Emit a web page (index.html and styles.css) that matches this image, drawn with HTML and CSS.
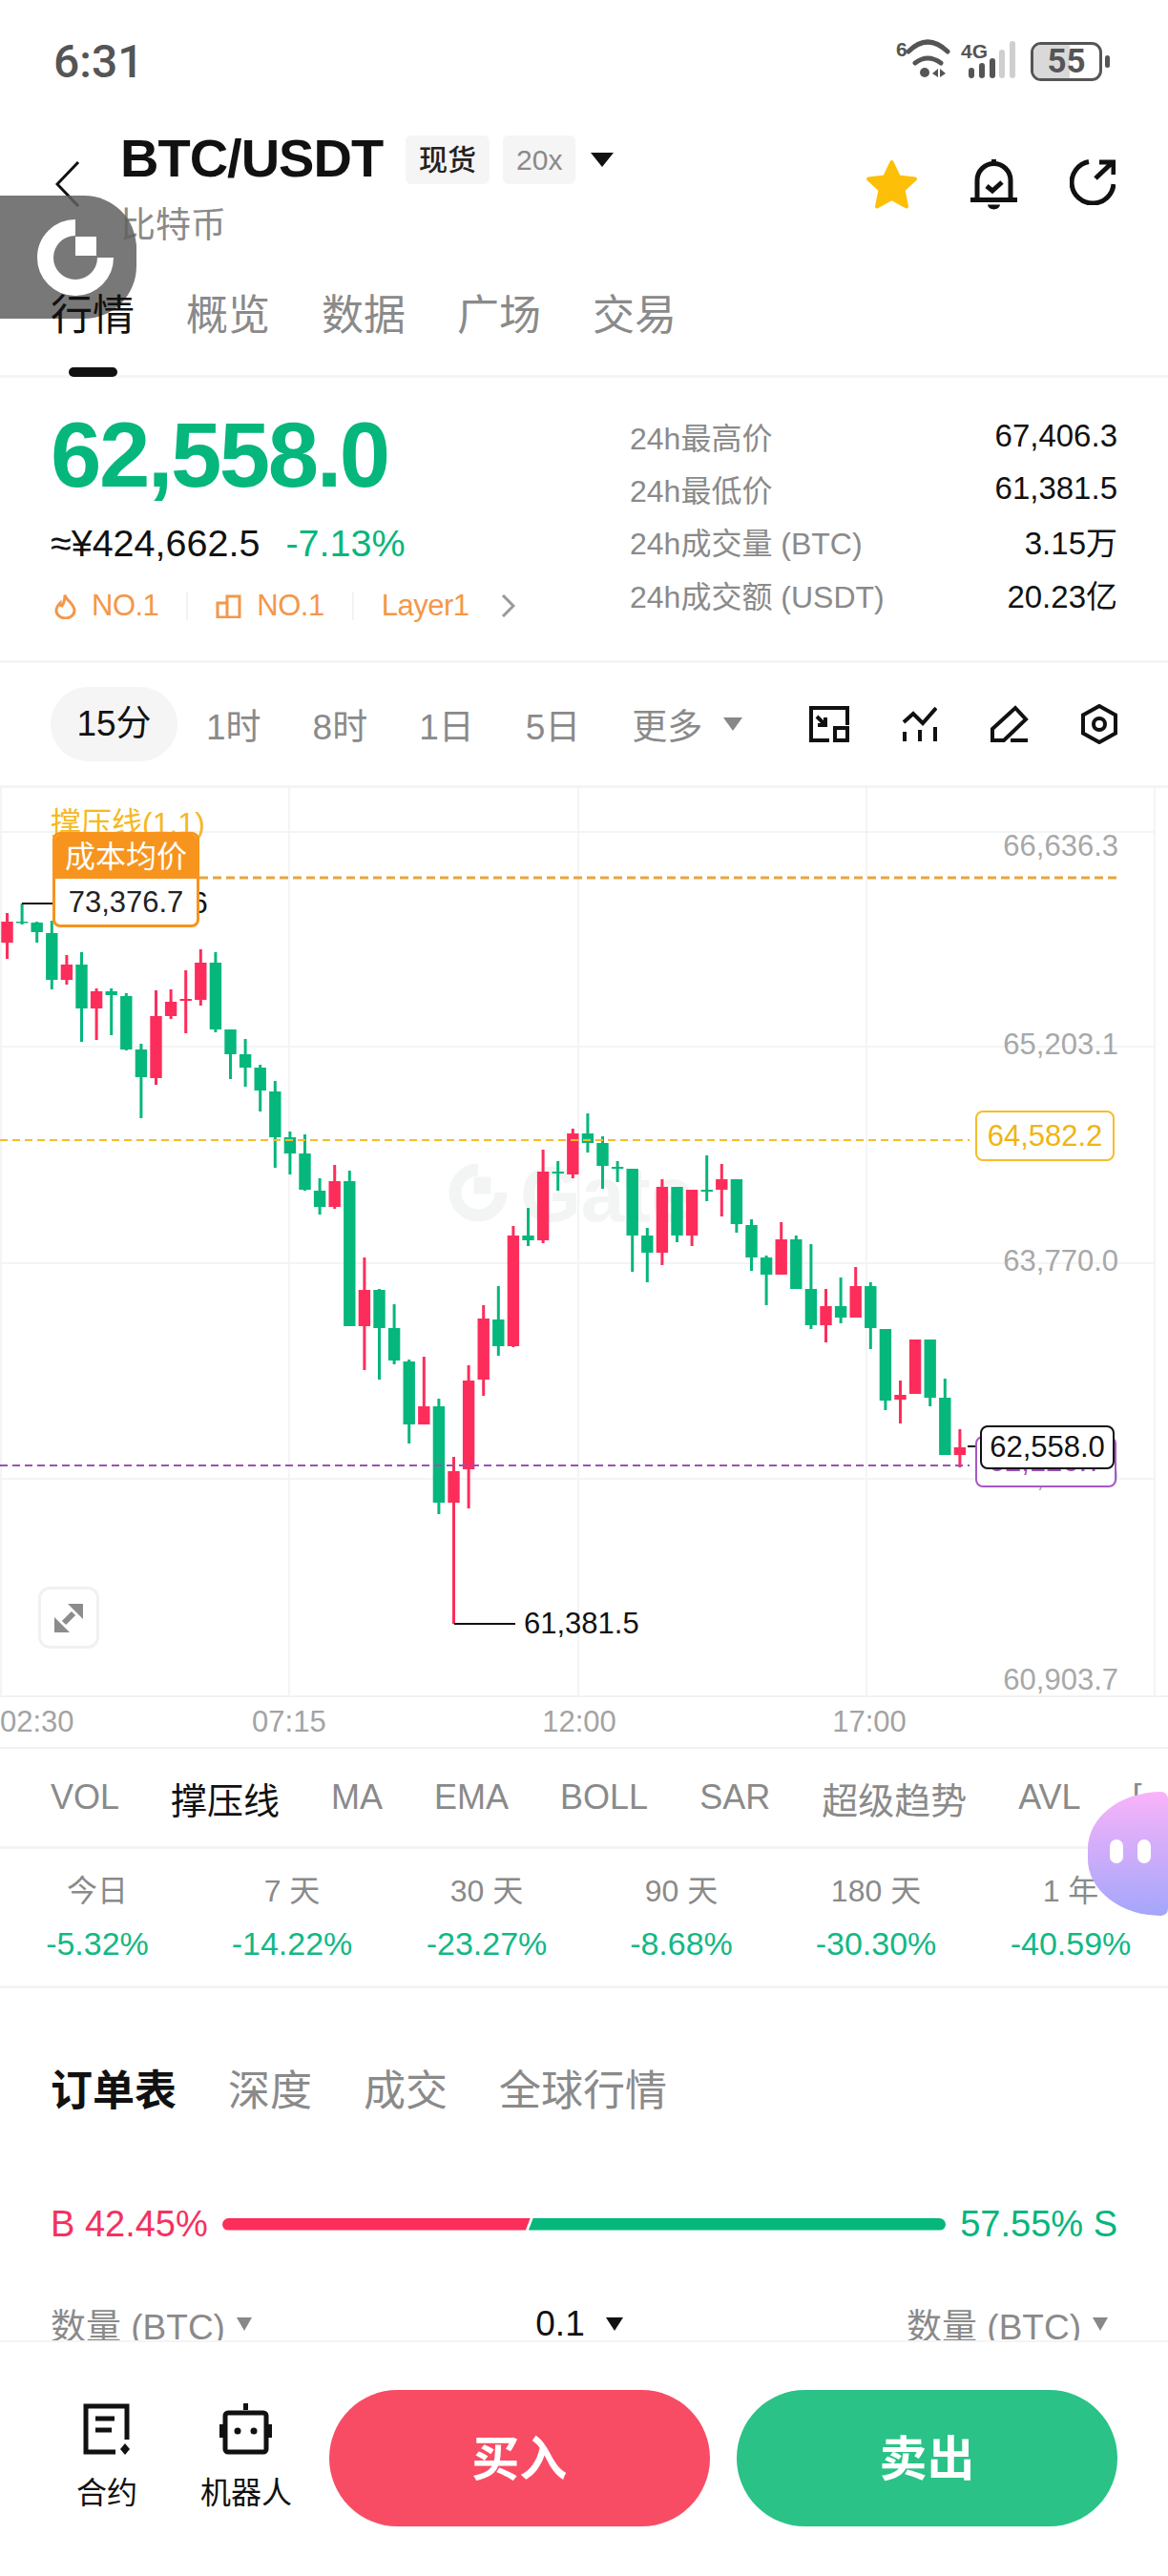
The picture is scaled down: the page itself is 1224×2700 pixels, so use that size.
FILE: index.html
```html
<!DOCTYPE html>
<html lang="en">

<head>
    <meta charset="UTF-8">
    <meta name="viewport" content="width=device-width, initial-scale=1.0">
    <title>BTC/USDT</title>
    <link rel="stylesheet" href="styles.css">
</head>

<body>
    <div class="page">
        <div class="status-bar">
            <span class="clock">6:31</span>
            <div class="status-icons">
                <svg class="net-icon" width="133" height="50" viewBox="0 0 133 50">
                    <text class="net-text" x="2" y="20">6</text>
                    <path class="net-arc" d="M15 15Q35 -5 56 15M22 27Q35 17 49 27"/>
                    <circle class="net-fill" cx="32" cy="37" r="5"/>
                    <polygon class="net-fill" points="40,38 46,33 46,42"/>
                    <polygon class="net-fill" points="48,33 54,38 48,42"/>
                    <text class="net-text" x="70" y="22">4G</text>
                    <rect class="net-fill" x="78" y="32" width="6" height="11" rx="3"/>
                    <rect class="net-fill" x="89" y="27" width="6" height="16" rx="3"/>
                    <rect class="net-fill" x="100" y="22" width="6" height="21" rx="3"/>
                    <rect class="net-off" x="110" y="13" width="6" height="30" rx="3"/>
                    <rect class="net-off" x="121" y="4" width="6" height="39" rx="3"/>
                </svg>
                <div class="battery"><span class="battery-level"></span><span class="battery-num">55</span></div>
                <span class="battery-nub"></span>
            </div>
        </div>

        <div class="coin-head">
            <svg class="back-icon" width="26" height="48" viewBox="0 0 26 48">
                <path d="M24 1L2 24L24 47"/>
            </svg>
            <div class="coin-title">
                <div class="title-row">
                    <h1>BTC/USDT</h1>
                    <span class="badge badge-dark">现货</span>
                    <span class="badge">20x</span>
                    <span class="caret caret-title"></span>
                </div>
                <p class="coin-name">比特币</p>
            </div>
            <div class="head-actions">
                <svg width="55" height="53" viewBox="0 0 55 53">
                    <polygon class="star" points="27.5,3 35,18.5 52,20.5 39.5,32 43,49.5 27.5,41 12,49.5 15.5,32 3,20.5 20,18.5"/>
                </svg>
                <svg class="line-icon" width="49" height="54" viewBox="0 0 49 54">
                    <path d="M7 42V22a17.5 17.5 0 0 1 35 0V42M0 42.5H49M24.5 0V5"/>
                    <path d="M17 28l6 5l10 -9"/>
                    <path class="solid" d="M18 47.5H31C30 54 19 54 18 47.5Z"/>
                </svg>
                <svg class="line-icon" width="48" height="48" viewBox="0 0 48 48">
                    <path d="M20 2.5A22 22 0 1 0 46 26"/>
                    <path d="M27 20L45 3M31 3H46V16"/>
                </svg>
            </div>
        </div>

        <div class="logo-float">
            <svg width="143" height="129" viewBox="0 0 143 129">
                <path class="logo-ring" d="M79 33.500A31.500 31.500 0 1 0 110.500 65"/>
                <rect class="logo-dot" x="79" y="43" width="22" height="20"/>
            </svg>
        </div>

        <div class="main-tabs">
            <span class="tab tab-on">行情</span>
            <span class="tab">概览</span>
            <span class="tab">数据</span>
            <span class="tab">广场</span>
            <span class="tab">交易</span>
        </div>

        <div class="overview">
            <div class="overview-left">
                <div class="last-price">62,558.0</div>
                <div class="price-sub">
                    <span class="cny">≈¥424,662.5</span>
                    <span class="change">-7.13%</span>
                </div>
                <div class="rank-tags">
                    <svg class="rank-icon" width="23" height="27" viewBox="0 0 23 27">
                        <path d="M11 1.500C12 7 21 11 21 18A9.500 8 0 0 1 2 18C2 14 4 12 6 10C6 12 7 13 8 13C10 10 11 6 11 1.500Z"/>
                    </svg>
                    <span class="rank-text">NO.1</span>
                    <span class="rank-sep"></span>
                    <svg class="rank-icon" width="27" height="25" viewBox="0 0 27 25">
                        <path d="M12 9H2V24H25V2H12V24"/>
                    </svg>
                    <span class="rank-text">NO.1</span>
                    <span class="rank-sep"></span>
                    <span class="rank-text">Layer1</span>
                    <svg class="rank-more" width="15" height="24" viewBox="0 0 15 24">
                        <path d="M2 1L13 12L2 23"/>
                    </svg>
                </div>
            </div>
            <div class="overview-right">
                <div class="stat-row"><span>24h最高价</span><b>67,406.3</b></div>
                <div class="stat-row"><span>24h最低价</span><b>61,381.5</b></div>
                <div class="stat-row"><span>24h成交量 (BTC)</span><b>3.15万</b></div>
                <div class="stat-row"><span>24h成交额 (USDT)</span><b>20.23亿</b></div>
            </div>
        </div>

        <div class="timeframes">
            <span class="tf tf-on">15分</span>
            <span class="tf">1时</span>
            <span class="tf">8时</span>
            <span class="tf">1日</span>
            <span class="tf">5日</span>
            <span class="tf tf-more">更多<span class="caret caret-gray"></span></span>
            <div class="tf-tools">
                <svg class="line-icon thin" width="42" height="38" viewBox="0 0 42 38">
                    <path d="M40 20V2H2V36H21M8 11L17 20M17 12V20H9"/>
                    <rect x="27" y="23" width="13" height="13"/>
                </svg>
                <svg class="line-icon thin" width="37" height="38" viewBox="0 0 37 38">
                    <path d="M2 17L12 8L22 18L36 2M3 27V37M19 25V37M35 22V37"/>
                </svg>
                <svg class="line-icon thin" width="41" height="40" viewBox="0 0 41 40">
                    <path d="M3 25L27 3L38 15L15 37H3ZM22 37H40"/>
                </svg>
                <svg class="line-icon thin" width="38" height="42" viewBox="0 0 38 42">
                    <path d="M19 2L36 11.500V30.500L19 40L2 30.500V11.500Z"/>
                    <circle cx="19" cy="21" r="6"/>
                </svg>
            </div>
        </div>

        <div class="chart">
            <svg id="chart-svg" class="chart-svg" width="1224" height="953" viewBox="0 826 1224 953"></svg>
            <span class="axis-label axis-1">66,636.3</span>
            <span class="axis-label axis-2">65,203.1</span>
            <span class="axis-label axis-3">63,770.0</span>
            <span class="axis-label axis-4">62,336.9</span>
            <span class="axis-label axis-5">60,903.7</span>
            <span class="indicator-name">撑压线(1.1)</span>
            <span class="high-label">66,905.6</span>
            <span class="low-label">61,381.5</span>
            <div class="cost-tag">
                <div class="cost-head">成本均价</div>
                <div class="cost-value">73,376.7</div>
            </div>
            <div class="price-tag tag-yellow">64,582.2</div>
            <div class="price-tag tag-purple">62,126.7</div>
            <div class="price-tag tag-last">62,558.0</div>
            <div class="expand-btn">
                <svg width="30" height="30" viewBox="0 0 30 30">
                    <path class="expand-line" d="M10 20L20 10"/>
                    <path class="expand-head" d="M14 0H30V16ZM0 14L16 30H0Z"/>
                </svg>
            </div>
        </div>

        <div class="time-axis">
            <span>02:30</span>
            <span>07:15</span>
            <span>12:00</span>
            <span>17:00</span>
        </div>

        <div class="indicators">
            <span>VOL</span>
            <span class="ind-cjk ind-on">撑压线</span>
            <span>MA</span>
            <span>EMA</span>
            <span>BOLL</span>
            <span>SAR</span>
            <span class="ind-cjk">超级趋势</span>
            <span>AVL</span>
            <span>[</span>
        </div>

        <div class="perf">
            <div class="perf-cell"><span>今日</span><b>-5.32%</b></div>
            <div class="perf-cell"><span>7 天</span><b>-14.22%</b></div>
            <div class="perf-cell"><span>30 天</span><b>-23.27%</b></div>
            <div class="perf-cell"><span>90 天</span><b>-8.68%</b></div>
            <div class="perf-cell"><span>180 天</span><b>-30.30%</b></div>
            <div class="perf-cell"><span>1 年</span><b>-40.59%</b></div>
        </div>

        <div class="assistant">
            <span class="assistant-eye"></span>
            <span class="assistant-eye"></span>
        </div>

        <div class="book-tabs">
            <span class="book-on">订单表</span>
            <span>深度</span>
            <span>成交</span>
            <span>全球行情</span>
        </div>

        <div class="ratio">
            <span class="ratio-buy">B 42.45%</span>
            <div class="ratio-bar">
                <span class="bar-buy"></span>
                <span class="bar-sell"></span>
            </div>
            <span class="ratio-sell">57.55% S</span>
        </div>

        <div class="book-head">
            <span class="book-col">数量 (BTC)<span class="caret caret-gray"></span></span>
            <span class="book-step">0.1<span class="caret caret-black"></span></span>
            <span class="book-col">数量 (BTC)<span class="caret caret-gray"></span></span>
        </div>

        <div class="bottom-bar">
            <div class="tool tool-contract">
                <svg class="line-icon" width="50" height="54" viewBox="0 0 50 54">
                    <path d="M34 51H3V3H46V38M13 16H33M13 28H30"/>
                    <polygon class="solid" points="44,42 49,48 44,54 39,48"/>
                </svg>
                <span>合约</span>
            </div>
            <div class="tool tool-robot">
                <svg class="line-icon" width="55" height="54" viewBox="0 0 55 54">
                    <rect x="6" y="10" width="43" height="41" rx="3"/>
                    <path d="M27.500 0V7M2 22V36M53 22V36"/>
                    <circle class="solid" cx="19" cy="29" r="3.500"/>
                    <circle class="solid" cx="36" cy="29" r="3.500"/>
                </svg>
                <span>机器人</span>
            </div>
            <button class="trade-btn btn-buy">买入</button>
            <button class="trade-btn btn-sell">卖出</button>
        </div>
    </div>

    <script src="chart.js"></script>
</body>

</html>
```

FILE: styles.css
```css
* {
    box-sizing: border-box;
}

body {
    margin: 0;
    background-color: white;
    font-family: "Liberation Sans", "Noto Sans CJK SC", sans-serif;
    color: #111;
}

h1,
p {
    margin: 0;
}

.page {
    position: relative;
    width: 1224px;
    height: 2700px;
    overflow: hidden;
}

/* status bar */
.status-bar {
    height: 125px;
    padding: 3px 61px 0 56px;
    display: flex;
    align-items: center;
    justify-content: space-between;
}

.clock {
    font-family: Roboto, sans-serif;
    font-size: 48px;
    font-weight: 500;
    color: #555;
}

.status-icons {
    display: flex;
    align-items: center;
}

.net-icon {
    margin-right: 10px;
}

.net-arc {
    fill: none;
    stroke: #555;
    stroke-width: 5;
    stroke-linecap: round;
}

.net-fill {
    fill: #555;
}

.net-off {
    fill: #cfcfcf;
}

.net-text {
    font-family: "Liberation Sans", sans-serif;
    font-size: 21px;
    font-weight: 700;
    fill: #555;
}

.battery {
    position: relative;
    width: 75px;
    height: 41px;
    border: 3px solid #555;
    border-radius: 11px;
    overflow: hidden;
    display: flex;
    align-items: center;
    justify-content: center;
}

.battery-level {
    position: absolute;
    left: 0;
    top: 0;
    bottom: 0;
    width: 55%;
    background-color: #d9d9d9;
}

.battery-num {
    position: relative;
    font-family: Roboto, sans-serif;
    font-size: 35px;
    font-weight: 700;
    color: #555;
}

.battery-nub {
    width: 5px;
    height: 13px;
    margin-left: 3px;
    border-radius: 3px;
    background-color: #555;
}

/* coin header */
.coin-head {
    height: 173px;
    padding: 17px 55px 0 58px;
    display: flex;
    align-items: flex-start;
}

.back-icon {
    margin: 27px 42px 0 0;
}

.back-icon path {
    fill: none;
    stroke: #111;
    stroke-width: 3;
}

.title-row {
    height: 51px;
    display: flex;
    align-items: center;
}

.title-row h1 {
    margin-bottom: 4px;
    margin-right: 24px;
    font-size: 56px;
    font-weight: 700;
    letter-spacing: -1px;
}

.badge {
    height: 51px;
    padding: 0 14px;
    margin-right: 14px;
    background-color: #f5f5f5;
    border-radius: 6px;
    font-size: 30px;
    line-height: 51px;
    color: #8a8a8a;
}

.badge-dark {
    color: #222;
    font-weight: 500;
}

.caret {
    display: inline-block;
    width: 0;
    height: 0;
    border-left: 10px solid transparent;
    border-right: 10px solid transparent;
    border-top: 14px solid #888;
}

.caret-title {
    margin-left: 2px;
    border-left-width: 12px;
    border-right-width: 12px;
    border-top: 15px solid #111;
}

.coin-name {
    margin-top: 19px;
    font-size: 37px;
    line-height: 50px;
    color: #8a8a8a;
}

.head-actions {
    margin: 25px 0 0 auto;
    display: flex;
    gap: 55px;
}

.star {
    fill: #fdbf07;
    stroke: #fdbf07;
    stroke-width: 4;
    stroke-linejoin: round;
}

.line-icon path,
.line-icon rect,
.line-icon circle {
    fill: none;
    stroke: #111;
    stroke-width: 5;
}

.line-icon .solid {
    fill: #111;
    stroke: none;
}

.line-icon polygon.solid {
    fill: #111;
}

.line-icon.thin path,
.line-icon.thin rect,
.line-icon.thin circle {
    stroke-width: 4;
}

/* floating logo */
.logo-float {
    position: absolute;
    left: 0;
    top: 205px;
    width: 143px;
    height: 129px;
    background-color: rgba(96, 96, 96, 0.85);
    border-radius: 0 55px 55px 0;
}

.logo-ring {
    fill: none;
    stroke: white;
    stroke-width: 17;
}

.logo-dot {
    fill: white;
}

/* main tabs */
.main-tabs {
    position: relative;
    height: 98px;
    padding: 1px 0 0 53px;
    display: flex;
    gap: 54px;
    border-bottom: 3px solid #f4f4f4;
}

.tab {
    position: relative;
    height: 64px;
    font-size: 44px;
    line-height: 64px;
    color: #8a8a8a;
}

.tab-on {
    color: #111;
}

.tab-on::after {
    content: "";
    position: absolute;
    left: 19px;
    top: 86px;
    width: 51px;
    height: 10px;
    background-color: #111;
    border-radius: 5px;
}

/* price overview */
.overview {
    height: 299px;
    padding: 31px 53px 0;
    display: flex;
    border-bottom: 3px solid #f4f4f4;
}

.last-price {
    height: 100px;
    font-size: 96px;
    font-weight: 700;
    line-height: 100px;
    letter-spacing: -2.500px;
    color: #05b67d;
}

.price-sub {
    margin-top: 17px;
    display: flex;
    gap: 27px;
    font-size: 39.500px;
    line-height: 50px;
}

.change {
    color: #05b67d;
}

.rank-tags {
    height: 40px;
    margin-top: 21px;
    padding-left: 4px;
    display: flex;
    align-items: center;
    gap: 16px;
    font-size: 31px;
    color: #f4974a;
}

.rank-icon path {
    fill: none;
    stroke: #f4974a;
    stroke-width: 3;
}

.rank-text {
    letter-spacing: -0.500px;
}

.rank-sep {
    width: 2px;
    height: 30px;
    margin: 0 13px;
    background-color: #f2f2f2;
}

.rank-more {
    margin-left: 17px;
}

.rank-more path {
    fill: none;
    stroke: #999;
    stroke-width: 3;
}

.overview-right {
    width: 511px;
    margin-left: auto;
    padding-top: 2px;
    font-size: 33px;
}

.stat-row {
    height: 55.300px;
    display: flex;
    align-items: center;
    justify-content: space-between;
    color: #8a8a8a;
}

.stat-row span {
    font-size: 32px;
}

.stat-row b {
    font-weight: 400;
    color: #111;
}

/* timeframe row */
.timeframes {
    height: 131px;
    padding: 0 53px;
    display: flex;
    align-items: center;
    gap: 54px;
    border-bottom: 3px solid #f4f4f4;
    font-size: 37px;
    color: #8a8a8a;
}

.tf-on {
    height: 78px;
    width: 133px;
    margin-right: -24px;
    background-color: #f5f5f5;
    border-radius: 39px;
    line-height: 78px;
    text-align: center;
    color: #111;
}

.tf-more {
    display: flex;
    align-items: center;
    gap: 22px;
}

.tf-tools {
    margin-left: auto;
    display: flex;
    align-items: center;
    gap: 55px;
}

/* chart */
.chart {
    position: relative;
    height: 953px;
    border-bottom: 2px solid #f2f2f2;
}

.chart-svg {
    display: block;
}

.grid-line {
    stroke: #f3f4f5;
    stroke-width: 2;
}

.mark-ring {
    fill: none;
    stroke: #f3f5f5;
    stroke-width: 13;
}

.mark-text {
    font-family: "Liberation Sans", sans-serif;
    font-size: 82px;
    font-weight: 700;
    fill: #f3f5f5;
}

.up {
    fill: #fd2d5b;
}

.down {
    fill: #05b77c;
}

.dash-orange {
    stroke: #e7a53d;
    stroke-width: 3;
    stroke-dasharray: 9 5;
}

.dash-yellow {
    stroke: #f5bd2a;
    stroke-width: 2;
    stroke-dasharray: 8 5;
}

.dash-purple {
    stroke: #9c4fb8;
    stroke-width: 2;
    stroke-dasharray: 8 5;
}

.leader {
    stroke: #111;
    stroke-width: 2;
}

.axis-label {
    position: absolute;
    right: 52px;
    font-size: 31px;
    line-height: 36px;
    color: #a8a8a8;
}

.axis-1 {
    top: 43px;
}

.axis-2 {
    top: 251px;
}

.axis-3 {
    top: 478px;
}

.axis-4 {
    top: 704px;
}

.axis-5 {
    top: 917px;
}

.indicator-name {
    position: absolute;
    left: 53px;
    top: 17px;
    font-size: 32px;
    line-height: 40px;
    color: #f5b921;
}

.high-label {
    position: absolute;
    left: 97px;
    top: 103px;
    font-size: 31px;
    line-height: 36px;
}

.low-label {
    position: absolute;
    left: 549px;
    top: 858px;
    font-size: 31px;
    line-height: 36px;
}

.cost-tag {
    position: absolute;
    left: 55px;
    top: 46px;
    width: 154px;
    height: 100px;
    border: 3px solid #f7941d;
    border-radius: 8px;
    background-color: white;
    overflow: hidden;
    text-align: center;
}

.cost-head {
    height: 46px;
    background-color: #f7941d;
    font-size: 32px;
    line-height: 46px;
    color: white;
}

.cost-value {
    font-size: 31px;
    line-height: 50px;
    color: #222;
}

.price-tag {
    position: absolute;
    display: flex;
    align-items: center;
    justify-content: center;
    background-color: white;
    border: 2px solid;
    border-radius: 8px;
    font-size: 31px;
}

.tag-yellow {
    left: 1022px;
    top: 338px;
    width: 146px;
    height: 53px;
    border-color: #f5bd2a;
    color: #f0b412;
}

.tag-purple {
    left: 1022px;
    top: 679px;
    width: 148px;
    height: 54px;
    border-color: #a757c6;
    color: #9c4fb8;
}

.tag-last {
    left: 1027px;
    top: 668px;
    width: 141px;
    height: 46px;
    border-color: #111;
    color: #111;
}

.expand-btn {
    position: absolute;
    left: 40px;
    top: 837px;
    width: 64px;
    height: 65px;
    border: 3px solid #f1f1f1;
    border-radius: 12px;
    display: flex;
    align-items: center;
    justify-content: center;
}

.expand-line {
    fill: none;
    stroke: #8c8c8c;
    stroke-width: 6;
}

.expand-head {
    fill: #8c8c8c;
}

/* time axis */
.time-axis {
    height: 54px;
    display: flex;
    align-items: center;
    gap: 226.500px;
    border-bottom: 2px solid #f2f2f2;
    font-size: 31px;
    color: #a3a3a3;
}

.time-axis span:first-child {
    margin-right: -40px;
}

/* indicator tabs */
.indicators {
    height: 105px;
    padding-left: 53px;
    display: flex;
    align-items: center;
    gap: 54px;
    border-bottom: 3px solid #f4f4f4;
    font-size: 36px;
    color: #8a8a8a;
    white-space: nowrap;
}

.ind-cjk {
    font-size: 38px;
}

.ind-on {
    color: #111;
}

/* period performance */
.perf {
    height: 146px;
    padding-top: 24px;
    display: grid;
    grid-template-columns: repeat(6, 204px);
    border-bottom: 3px solid #f4f4f4;
}

.perf-cell {
    display: flex;
    flex-direction: column;
    align-items: center;
    gap: 15px;
    font-size: 32px;
    line-height: 40px;
    color: #8a8a8a;
}

.perf-cell b {
    font-size: 34px;
    font-weight: 400;
    color: #12b886;
}

.assistant {
    position: absolute;
    left: 1140px;
    top: 1878px;
    width: 84px;
    height: 130px;
    padding: 50px 18px 0 23px;
    display: flex;
    justify-content: space-between;
    background: linear-gradient(180deg, #f9b3f9 0%, #a3a6fb 100%);
    border-radius: 84px 8px 8px 84px / 65px 8px 8px 65px;
}

.assistant-eye {
    width: 14px;
    height: 25px;
    background-color: white;
    border-radius: 7px;
}

/* order book */
.book-tabs {
    height: 208px;
    padding-left: 53px;
    display: flex;
    align-items: center;
    gap: 54px;
    font-size: 44px;
    color: #8a8a8a;
}

.book-on {
    font-weight: 700;
    color: #111;
}

.ratio {
    height: 78px;
    padding: 0 53px;
    display: flex;
    align-items: center;
    font-size: 38px;
    white-space: nowrap;
}

.ratio-buy {
    width: 180px;
    color: #f5315f;
}

.ratio-sell {
    width: 166px;
    margin-left: 14px;
    text-align: right;
    color: #05b67d;
}

.ratio-bar {
    flex: 1;
    height: 13px;
    display: flex;
}

.bar-buy {
    flex: 322;
    margin-right: -2px;
    background-color: #fb2d5b;
    border-radius: 7px 0 0 7px;
    clip-path: polygon(0 0, 100% 0, calc(100% - 5px) 100%, 0 100%);
}

.bar-sell {
    flex: 436;
    background-color: #05b77c;
    border-radius: 0 7px 7px 0;
    clip-path: polygon(5px 0, 100% 0, 100% 100%, 0 100%);
}

.book-head {
    height: 132px;
    padding: 0 63px 0 53px;
    display: flex;
    align-items: center;
    justify-content: space-between;
    font-size: 37px;
    color: #8a8a8a;
}

.book-col {
    display: flex;
    align-items: center;
    gap: 12px;
}

.book-step {
    display: flex;
    align-items: center;
    gap: 22px;
    color: #111;
}

.caret-black {
    border-left-width: 9px;
    border-right-width: 9px;
    border-top-color: #111;
}

.book-col .caret {
    border-left-width: 8px;
    border-right-width: 8px;
}

/* bottom actions */
.bottom-bar {
    position: absolute;
    left: 0;
    right: 0;
    bottom: 0;
    height: 247px;
    padding: 50px 53px 0 80px;
    display: flex;
    align-items: flex-start;
    background-color: white;
    border-top: 2px solid #f4f4f4;
}

.tool {
    margin-top: 14px;
    display: flex;
    flex-direction: column;
    align-items: center;
    gap: 20px;
    font-size: 32px;
    line-height: 40px;
    color: #111;
    white-space: nowrap;
}

.tool-contract {
    width: 64px;
    margin-right: 65px;
}

.tool-robot {
    width: 98px;
    margin-right: 38px;
}

.trade-btn {
    width: 400px;
    height: 143px;
    padding: 0 0 7px;
    border: none;
    border-radius: 72px;
    font-family: inherit;
    font-size: 50px;
    font-weight: 700;
    color: white;
}

.btn-buy {
    margin-right: 28px;
    background-color: #f84c64;
}

.btn-sell {
    background-color: #2bc287;
}
```

FILE: chart.js
```js
const NS = 'http://www.w3.org/2000/svg';
const svg = document.getElementById('chart-svg');

// [up?, wickTop, wickBottom, bodyTop, bodyBottom], y in page pixels
const candles = [
    [1, 957, 1005, 966, 988], [0, 947, 969, 966, 967.5], [0, 966, 988, 967, 977],
    [0, 965, 1037, 978, 1027], [1, 1001, 1032, 1011, 1027], [0, 998, 1092, 1011, 1057],
    [1, 1036, 1090, 1039, 1057], [0, 1036, 1085, 1039, 1043], [0, 1041, 1101, 1044, 1100],
    [0, 1094, 1172, 1100, 1129], [1, 1038, 1137, 1065, 1130], [1, 1037, 1068, 1050, 1065],
    [1, 1017, 1083, 1047, 1049], [1, 995, 1054, 1009, 1048], [0, 998, 1082, 1009, 1079],
    [0, 1079, 1131, 1079, 1105], [0, 1089, 1139, 1105, 1119], [0, 1116, 1165, 1119, 1143],
    [0, 1133, 1224, 1144, 1192], [0, 1186, 1231, 1192, 1209], [0, 1189, 1248, 1209, 1247],
    [0, 1235, 1273, 1248, 1265], [1, 1221, 1267, 1238, 1265], [0, 1227, 1390, 1238, 1390],
    [1, 1318, 1436, 1352, 1390], [0, 1351, 1446, 1352, 1392], [0, 1367, 1430, 1392, 1426],
    [0, 1425, 1513, 1427, 1493], [1, 1422, 1493, 1474, 1493], [0, 1466, 1587, 1474, 1575],
    [1, 1527, 1702, 1542, 1575], [1, 1431, 1581, 1447, 1540], [1, 1368, 1463, 1382, 1446],
    [0, 1348, 1421, 1383, 1411], [1, 1285, 1412, 1295, 1411], [0, 1266, 1306, 1295, 1300],
    [1, 1205, 1303, 1228, 1300], [0, 1217, 1248, 1228, 1230], [1, 1183, 1235, 1188, 1231],
    [0, 1167, 1208, 1188, 1198], [0, 1191, 1246, 1198, 1222], [0, 1217, 1239, 1223, 1225],
    [0, 1225, 1333, 1225, 1295], [0, 1287, 1344, 1295, 1313], [1, 1236, 1326, 1244, 1313],
    [0, 1244, 1302, 1244, 1295], [1, 1247, 1306, 1247, 1295], [0, 1211, 1259, 1247, 1249],
    [1, 1220, 1275, 1236, 1247], [0, 1236, 1292, 1236, 1283], [0, 1278, 1332, 1284, 1318],
    [0, 1316, 1368, 1318, 1336], [1, 1281, 1336, 1299, 1336], [0, 1295, 1351, 1299, 1351],
    [0, 1304, 1393, 1351, 1389], [1, 1351, 1407, 1369, 1389], [0, 1339, 1387, 1369, 1381],
    [1, 1328, 1381, 1348, 1381], [0, 1344, 1414, 1348, 1392], [0, 1393, 1478, 1393, 1468],
    [1, 1447, 1492, 1462, 1467], [1, 1404, 1461, 1404, 1461], [0, 1404, 1474, 1404, 1465],
    [0, 1445, 1525, 1465, 1525], [1, 1498, 1538, 1517, 1525]
];

function add(tag, attrs) {
    const el = document.createElementNS(NS, tag);
    Object.keys(attrs).forEach((key) => el.setAttribute(key, attrs[key]));
    svg.appendChild(el);
    return el;
}

function line(x1, y1, x2, y2, cls) {
    add('line', { x1, y1, x2, y2, class: cls });
}

// grid
[872, 1097, 1324, 1550].forEach((y) => line(0, y, 1210, y, 'grid-line'));
[1, 303, 606, 908, 1210].forEach((x) => line(x, 826, x, 1778, 'grid-line'));

// watermark
add('path', { class: 'mark-ring', d: 'M501 1226A24 24 0 1 0 525 1250' });
add('rect', { class: 'mark-ring', x: 503, y: 1240, width: 5, height: 5 });
add('text', { class: 'mark-text', x: 545, y: 1280 }).textContent = 'Gate';

// candles
candles.forEach((c, i) => {
    const x = 7.5 + i * 15.6;
    const cls = c[0] ? 'up' : 'down';
    add('rect', { class: cls, x: x - 1.5, y: c[1], width: 3, height: c[2] - c[1] });
    add('rect', { class: cls, x: x - 6.2, y: c[3], width: 12.4, height: c[4] - c[3] });
});

// price lines go over the candles
line(209, 920, 1170, 920, 'dash-orange');
line(0, 1195, 1016, 1195, 'dash-yellow');
line(0, 1536, 1016, 1536, 'dash-purple');

// high, low and last markers
line(23, 947, 92, 947, 'leader');
line(476, 1702, 540, 1702, 'leader');
line(1014, 1516, 1027, 1516, 'leader');
```
